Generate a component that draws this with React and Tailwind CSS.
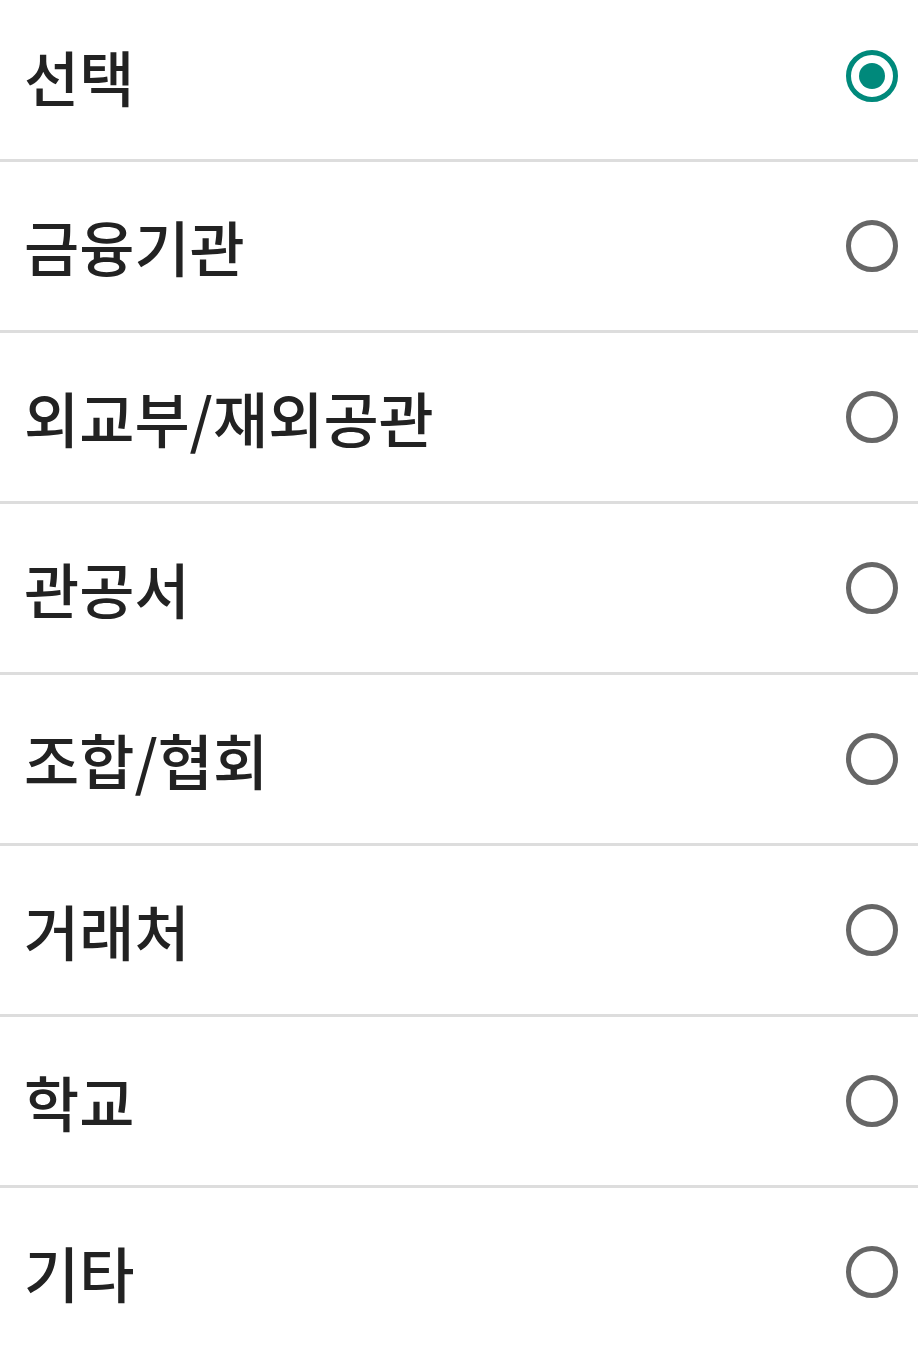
const items = ['선택', '금융기관', '외교부/재외공관', '관공서', '조합/협회', '거래처', '학교', '기타']

const Radio = ({ checked }) => {
	if (checked) {
		return (
			<span className="flex h-[52px] w-[52px] items-center justify-center rounded-full border-[5px] border-[#00897b]">
				<span className="h-[26px] w-[26px] rounded-full bg-[#00897b]" />
			</span>
		)
	}
	return <span className="block h-[52px] w-[52px] rounded-full border-[5px] border-[#666666]" />
}

const App = () => {
	return (
		<div className="bg-white" style={{ fontFamily: '"Noto Sans CJK KR", "Noto Sans", sans-serif' }}>
			{items.map((label, i) => (
				<div
					key={label}
					className={
						i === 0
							? 'flex h-[159px] items-center justify-between pb-[7px] pl-[24px] pr-[20px]'
							: 'flex h-[171px] items-center justify-between border-t-[3px] border-[#dddddd] pl-[24px] pr-[20px]'
					}
				>
					<span className="text-[60px] leading-none font-medium text-[#222222]">{label}</span>
					<Radio checked={i === 0} />
				</div>
			))}
		</div>
	)
}

export default App
